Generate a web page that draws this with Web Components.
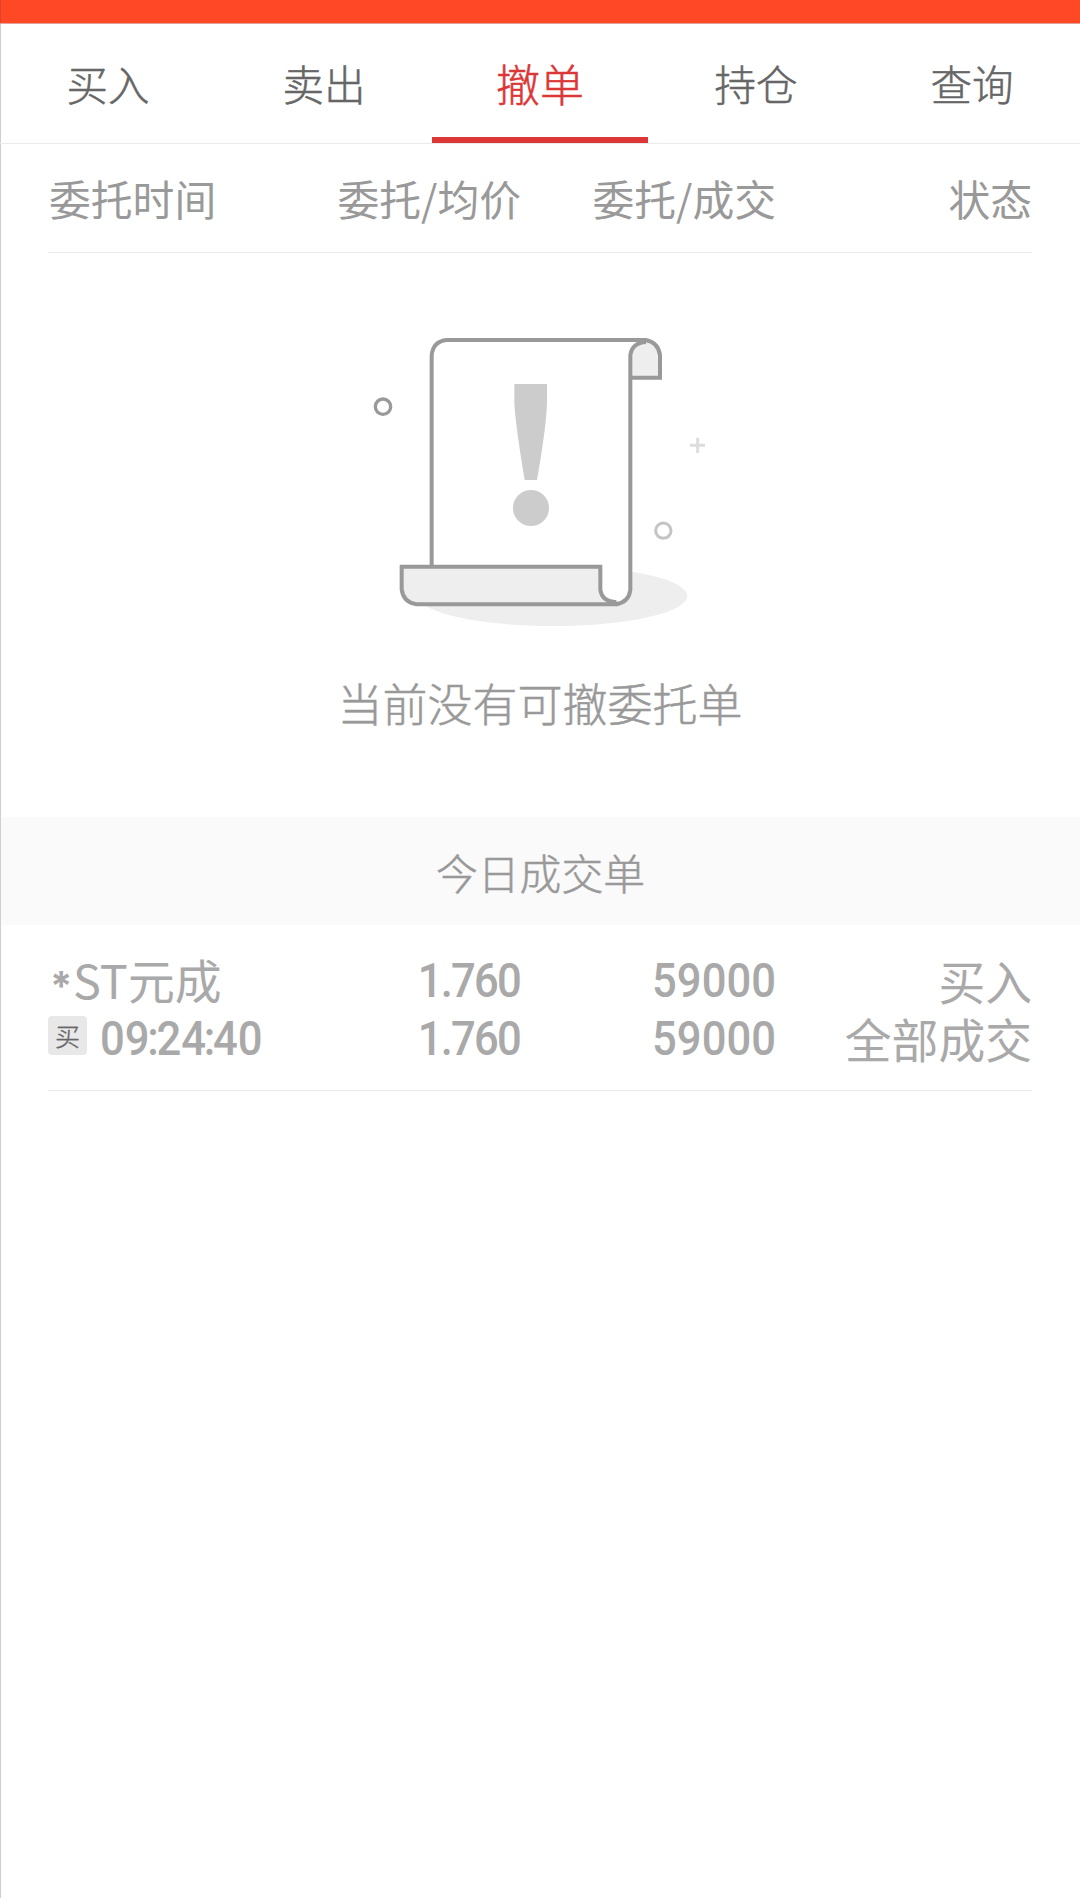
<!DOCTYPE html>
<html lang="zh-CN">
<head>
<meta charset="utf-8">
<title>撤单</title>
<style>
  body {
    margin: 0;
    background: #fff;
    font-family: "Noto Sans CJK SC", sans-serif;
    color: #999;
  }
</style>
</head>
<body>
<trade-page>
  <tab-bar>
    <tab-item>买入</tab-item>
    <tab-item>卖出</tab-item>
    <tab-item active>撤单</tab-item>
    <tab-item>持仓</tab-item>
    <tab-item>查询</tab-item>
  </tab-bar>
  <order-head>
    <span>委托时间</span>
    <span>委托/均价</span>
    <span>委托/成交</span>
    <span>状态</span>
  </order-head>
  <empty-state>当前没有可撤委托单</empty-state>
  <section-title>今日成交单</section-title>
  <order-row name="ST元成" side="买" time="09:24:40" price="1.760" average="1.760"
    amount="59000" filled="59000" action="买入" status="全部成交"></order-row>
</trade-page>

<script>
  function attach(el, html) {
    if (!el.shadowRoot) {
      const template = document.createElement('template');
      template.innerHTML = html;
      el.attachShadow({ mode: 'open' });
      el.shadowRoot.appendChild(template.content.cloneNode(true));
    }
  }

  class TradePage extends HTMLElement {
    connectedCallback() {
      attach(this, `
        <style>
          :host {
            display: block;
            box-sizing: border-box;
            height: 1898px;
            background: linear-gradient(rgba(0, 0, 0, 0.19), rgba(0, 0, 0, 0.19)) left / 1px 100% no-repeat;
            overflow: hidden;
          }
          header {
            box-sizing: border-box;
            height: 24px;
            background: linear-gradient(to right, #d94526 1px, #ff4926 1px);
            border-bottom: 1px solid #dfa399;
          }
        </style>
        <header></header>
        <slot></slot>
      `);
    }
  }

  class TabBar extends HTMLElement {
    connectedCallback() {
      attach(this, `
        <style>
          :host {
            display: grid;
            grid-template-columns: repeat(5, 1fr);
            height: 119px;
            border-bottom: 1px solid #ebebeb;
          }
        </style>
        <slot></slot>
      `);
    }
  }

  class TabItem extends HTMLElement {
    connectedCallback() {
      attach(this, `
        <style>
          :host {
            display: flex;
            flex-direction: column;
            box-sizing: border-box;
            align-items: center;
            padding-top: 29px;
            font-size: 41.5px;
            font-weight: 300;
            line-height: 60px;
            color: #666;
            -webkit-text-stroke: 0.5px;
            border-bottom: 6px solid transparent;
          }
          :host([active]) {
            font-size: 44px;
            color: #dc3737;
            border-color: #dc3737;
          }
        </style>
        <slot></slot>
      `);
    }
  }

  class OrderHead extends HTMLElement {
    connectedCallback() {
      attach(this, `
        <style>
          :host {
            display: grid;
            grid-template-columns: 217px 256px 255px 256px;
            margin: 0 48px;
            height: 108px;
            line-height: 109px;
            border-bottom: 1px solid #ebebeb;
            font-size: 41.8px;
          }
          ::slotted(span) {
            text-align: right;
          }
          ::slotted(span:first-child) {
            padding-left: 1px;
            text-align: left;
          }
        </style>
        <slot></slot>
      `);
    }
  }

  class EmptyState extends HTMLElement {
    connectedCallback() {
      attach(this, `
        <style>
          :host {
            display: flex;
            flex-direction: column;
            align-items: center;
            box-sizing: border-box;
            height: 564px;
            padding-top: 57px;
            font-size: 45px;
            font-weight: 300;
            line-height: 60px;
            -webkit-text-stroke: 0.5px;
          }
          svg {
            width: 380px;
            height: 340px;
            margin-bottom: 23px;
          }
        </style>
        <svg viewBox="0 0 1140 1020" fill="none" stroke="#999" stroke-width="12">
          <ellipse cx="609" cy="858" rx="403" ry="90" fill="#eee" stroke="none"/>
          <path d="M245 770V136Q249 94 290 90H886Q925 96 930 136V203H841V840Q836 878 796 883H200Q160 878 155 838V770Z" fill="#fff" stroke="none"/>
          <path d="M841 203V136Q846 99 888 96Q925 98 930 136V203Z" fill="#eee" stroke="none"/>
          <path d="M245 770V136Q249 94 290 90H886Q925 96 930 136V203H841"/>
          <path d="M888 96Q846 98 841 136V840Q836 878 796 883"/>
          <path d="M155 770H751V840Q756 873 794 876L796 883H200Q160 878 155 838Z" fill="#eee"/>
          <path d="M493 222H591V280Q589 350 561 510H524Q497 350 493 280Z" fill="#ccc" stroke="none"/>
          <circle cx="543" cy="594" r="54" fill="#ccc" stroke="none"/>
          <circle cx="99" cy="290" r="23" stroke-width="10"/>
          <circle cx="940" cy="662" r="23" stroke="#c4c4c4" stroke-width="9"/>
          <path d="M1020 406H1065M1043 383V429" stroke="#ddd" stroke-width="9"/>
        </svg>
        <slot></slot>
      `);
    }
  }

  class SectionTitle extends HTMLElement {
    connectedCallback() {
      attach(this, `
        <style>
          :host {
            display: block;
            height: 108px;
            margin-left: 1px;
            background: #fafafa;
            text-align: center;
            font-size: 41.8px;
            font-weight: 300;
            line-height: 110px;
            -webkit-text-stroke: 0.5px;
          }
        </style>
        <slot></slot>
      `);
    }
  }

  class OrderRow extends HTMLElement {
    connectedCallback() {
      const get = (key) => this.getAttribute(key);
      // colons take less room than the digits
      const time = get('time').replace(/:/g, '<i>:</i>');
      attach(this, `
        <style>
          :host {
            display: grid;
            grid-template-columns: 217px 256px 255px 256px;
            grid-template-rows: 58px 58px;
            box-sizing: border-box;
            margin: 0 48px;
            height: 166px;
            padding-top: 26px;
            border-bottom: 1px solid #ebebeb;
            line-height: 58px;
            color: #a9a9a9;
            white-space: nowrap;
          }
          .name, .status {
            font-size: 46.8px;
          }
          .name {
            display: flex;
            line-height: 55px;
          }
          .star {
            width: 25px;
            padding-left: 2px;
            box-sizing: border-box;
            font-family: Inter, sans-serif;
            font-size: 40px;
            font-weight: 700;
            line-height: 70px;
          }
          .status {
            text-align: right;
            line-height: 57px;
          }
          .num {
            display: block;
            text-align: right;
            font-family: Roboto, sans-serif;
            font-size: 49px;
            font-weight: 500;
            line-height: 60px;
            transform: scaleX(0.89);
            transform-origin: right;
          }
          .price {
            letter-spacing: -2px;
            padding-right: 1px;
          }
          i {
            margin: 0 -2.6px;
            font-style: normal;
          }
          .time {
            display: flex;
            gap: 13px;
          }
          .time .num {
            transform-origin: left;
            line-height: 59px;
          }
          .tag {
            flex: none;
            width: 39px;
            height: 39px;
            margin-top: 7px;
            border-radius: 4px;
            background: #e8e8e8;
            color: #666;
            text-align: center;
            font-size: 25px;
            font-weight: 300;
            line-height: 38px;
            -webkit-text-stroke: 0.4px;
          }
        </style>
        <div class="name"><span class="star">*</span><span>${get('name')}</span></div>
        <span class="num price">${get('price')}</span>
        <span class="num">${get('amount')}</span>
        <span class="status">${get('action')}</span>
        <div class="time"><span class="tag">${get('side')}</span><span class="num">${time}</span></div>
        <span class="num price">${get('average')}</span>
        <span class="num">${get('filled')}</span>
        <span class="status">${get('status')}</span>
      `);
    }
  }

  customElements.define('trade-page', TradePage);
  customElements.define('tab-bar', TabBar);
  customElements.define('tab-item', TabItem);
  customElements.define('order-head', OrderHead);
  customElements.define('empty-state', EmptyState);
  customElements.define('section-title', SectionTitle);
  customElements.define('order-row', OrderRow);
</script>
</body>
</html>
